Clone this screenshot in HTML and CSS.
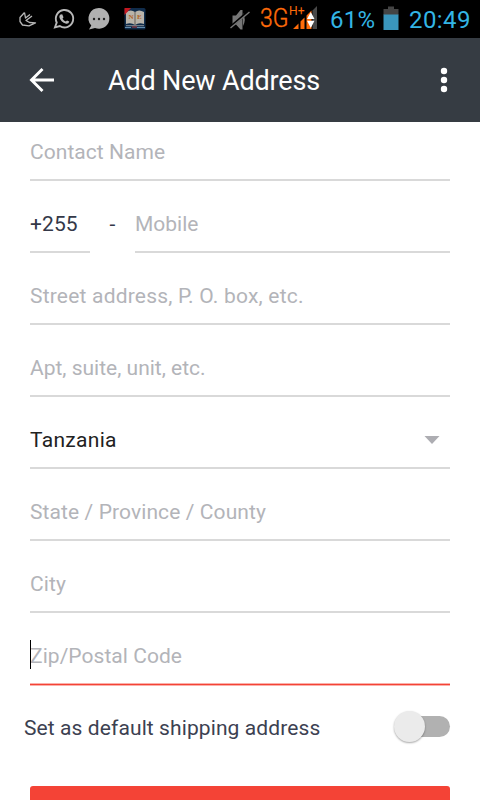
FILE: index.html
```html
<!DOCTYPE html>
<html lang="en">
<head>
<meta charset="utf-8">
<title>Add New Address</title>
<link rel="stylesheet" href="styles.css">
</head>
<body>
<div class="status">
  <svg class="notifications" width="160" height="38" viewBox="0 0 160 38">
    <path d="M24.500 12.500L20 17.500V21.500L22.500 25L29 25.800L35.500 22.800L29.500 22.500L26 20.500L32 16M24.500 12.500L25.500 18L30 14.500" fill="none" stroke="#b8b8b8" stroke-width="1.300" stroke-linejoin="round"/>
    <path d="M55 27.300L56.700 22.500A8.700 8.700 0 1 1 59.800 26Z" fill="none" stroke="#b8b8b8" stroke-width="1.900"/>
    <path d="M60.500 14.500L62.200 14.300L63.500 17.200L62.500 18.700Q63.700 20.800 65.800 21.600L67 20.400L69.300 21.600Q68.800 24 66.200 23.800Q60.500 22.300 59.300 17Q59.300 15.300 60.500 14.500Z" fill="#b8b8b8"/>
    <path d="M99 8A10.400 10.400 0 1 1 95 28L89 29.500L91.300 25.500A10.400 10.400 0 0 1 99 8Z" fill="#b0b0b0"/>
    <g fill="#222"><circle cx="94" cy="19" r="1.200"/><circle cx="99" cy="19" r="1.200"/><circle cx="104" cy="19" r="1.200"/></g>
    <rect x="124.500" y="8" width="21" height="21.500" rx="1.500" fill="#102c4b"/>
    <path d="M126 12Q131 9 135 12Q139 9 144 12V24Q139 22 135 25Q131 22 126 24Z" fill="#b9b4aa"/>
    <path d="M135 12V25" stroke="#514b46" stroke-width=".8"/>
    <path d="M124.500 8H131L124.500 15Z" fill="#c51820"/>
    <path d="M126 25.700H144" stroke="#aaa" stroke-width=".8"/>
    <text x="128.500" y="18.800" class="tiny">N</text><text x="137" y="18.800" class="tiny">E</text>
    <path d="M125 27.500H131M137 27.500H145" stroke="#628bac"/><path d="M132 27H137" stroke="#b23b40"/>
  </svg>
  <svg class="signals" width="100" height="38" viewBox="0 0 100 38">
    <path d="M12.500 15.500H16L20.500 10H22.500V29.500H20.500L16 24.500H12.500ZM23 13Q26.500 19.500 23 26Z" fill="#777"/>
    <path d="M11 26.500L29 11" stroke="#000" stroke-width="2.500"/><path d="M10.500 28L29.500 12" stroke="#777" stroke-width="1.400"/>
    <text x="40" y="27" textLength="28.500" lengthAdjust="spacingAndGlyphs" class="network">3G</text>
    <text x="69" y="14.700" textLength="15.500" lengthAdjust="spacingAndGlyphs" class="network-plus">H+</text>
    <path d="M73 29L78.500 23.500V29ZM80.500 29V21.500L84.500 17.500V29ZM86.500 29V15.500L91.500 10.500V29Z" fill="#ff6c0a"/>
    <path d="M92.500 29V10.500L97 6V29Z" fill="#484848"/>
    <path d="M90.800 12L94.500 19H87ZM87 20.800H94.500L90.800 28Z" fill="#fff"/>
  </svg>
  <span class="percent">61%</span>
  <svg class="battery" width="16" height="38" viewBox="0 0 16 38"><path d="M.5 9H5V6.500H11V9H15.500V15H.5Z" fill="#444"/><path d="M.5 14.500H15.500V30H.5Z" fill="#3a96bd"/></svg>
  <span class="clock">20:49</span>
</div>
<header class="toolbar">
  <svg class="back" width="26" height="26" viewBox="0 0 26 26"><path d="M25 13H3M13.500 2L2.500 13L13.500 24" fill="none" stroke="#fff" stroke-width="2.900"/></svg>
  <h1>Add New Address</h1>
  <svg class="more" width="8" height="26" viewBox="0 0 8 26" fill="#fff"><circle cx="4" cy="4" r="3.200"/><circle cx="4" cy="13" r="3.200"/><circle cx="4" cy="22" r="3.200"/></svg>
</header>
<main class="form">
  <div class="field first">Contact Name</div>
  <div class="phone">
    <div class="field code">+255</div><span class="dash">-</span><div class="field mobile">Mobile</div>
  </div>
  <div class="field street">Street address, P. O. box, etc.</div>
  <div class="field apt">Apt, suite, unit, etc.</div>
  <div class="field country"><span>Tanzania</span><svg width="16" height="8" viewBox="0 0 16 8"><path d="M.5 0H15.500L8 8Z" fill="#adadb2"/></svg></div>
  <div class="field">State / Province / County</div>
  <div class="field">City</div>
  <div class="field active"><i class="caret"></i>Zip/Postal Code</div>
  <div class="default"><span>Set as default shipping address</span><div class="switch"><div class="thumb"></div></div></div>
  <div class="save"></div>
</main>
</body>
</html>
```
FILE: styles.css
```css
* { box-sizing: border-box; }
body { margin: 0; width: 480px; height: 800px; overflow: hidden; background: #fff; font-family: Roboto, sans-serif; }
svg { display: block; flex: none; }
.status { height: 38px; background: #000; display: flex; align-items: center; color: #33b5e5; font-size: 24px; line-height: 38px; white-space: nowrap; }
.signals { margin-left: 60px; }
.percent { width: 53px; margin-left: 10px; padding-top: 2px; letter-spacing: .3px; }
.clock { margin-left: 10px; padding-top: 2px; letter-spacing: .4px; }
.network { font-size: 26px; font-weight: 300; fill: #ff6c0a; stroke: #ff6c0a; stroke-width: .4px; }
.network-plus { font-size: 12px; fill: #ff6c0a; }
.tiny { font: bold 7px "Liberation Serif", serif; fill: #b16324; }
.toolbar { height: 84px; background: #363c43; display: flex; align-items: center; padding: 0 32px 0 29px; color: #fff; }
.toolbar h1 { margin: 2px auto 0 53px; font-size: 27px; line-height: 36px; font-weight: 400; letter-spacing: -.17px; white-space: nowrap; }
.form { padding: 0 30px; font-size: 21px; letter-spacing: .1px; color: #b3b4b9; }
.field { height: 72px; border-bottom: 2px solid #d9d9d9; padding-top: 28px; line-height: 30px; white-space: nowrap; }
.first { height: 59px; padding-top: 15px; letter-spacing: .05px; }
.phone { display: flex; }
.code { width: 60px; color: #343848; }
.dash { width: 45px; padding: 28px 0 0 19.5px; line-height: 30px; color: #343848; }
.mobile { flex: 1; letter-spacing: 0; }
.street { letter-spacing: .2px; }
.apt { letter-spacing: 0; }
.country { display: flex; justify-content: space-between; color: #222; letter-spacing: .3px; }
.country svg { margin: 11px 10px 0 0; }
.active { position: relative; border-bottom: 1px solid #f44336; box-shadow: 0 1px #fab0aa, inset 0 -1px #fab0aa; letter-spacing: .05px; }
.caret { position: absolute; left: 0; top: 27px; width: 1px; height: 29px; background: #000; }
.default { height: 101px; margin-left: -6px; display: flex; justify-content: space-between; padding-top: 27px; line-height: 32px; color: #3c4151; }
.switch { width: 50px; height: 21px; margin-top: 4px; border-radius: 11px; background: #b1b1b1; position: relative; }
.thumb { position: absolute; left: -6px; top: -5px; width: 31px; height: 31px; border-radius: 50%; background: #ebebeb; box-shadow: 0 1px 2px rgba(0,0,0,.35); }
.save { height: 14px; border-radius: 3px 3px 0 0; background: #f44336; }
```
